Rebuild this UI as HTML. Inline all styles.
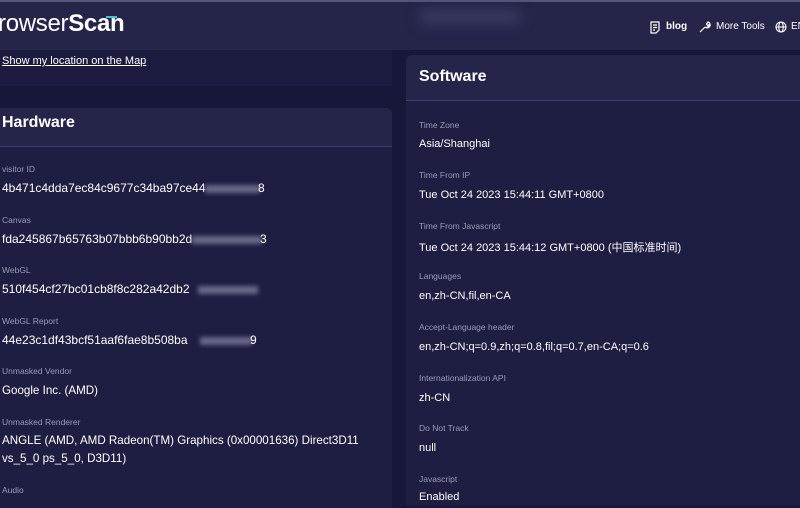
<!DOCTYPE html>
<html><head><meta charset="utf-8"><style>
*{margin:0;padding:0;box-sizing:border-box}
body{width:800px;height:500px;overflow:hidden;background:#17173a;font-family:"Liberation Sans","Noto Sans CJK SC",sans-serif;color:#fff;position:relative}
.hdr{position:absolute;left:0;top:0;width:800px;height:50px;background:#25254a;border-top:2px solid #55557a}
.logo{position:absolute;left:-2px;top:8px;font-size:24px;letter-spacing:-0.3px}
.logo b{font-weight:bold}
.nav{position:absolute;top:19px;font-size:10px}
.band{position:absolute;left:0;top:50px;width:392px;height:36px;background:#1c1c40}
.link{position:absolute;left:2px;top:55px;font-size:11px;text-decoration:underline}
.card{position:absolute;background:#1e1e42}
.ch{position:absolute;background:#25254a;border-bottom:1px solid #3e3e66}
.h{position:absolute;font-size:16px;font-weight:bold}
.l{position:absolute;font-size:8.5px;color:#9a9ab8}
.v{position:absolute;font-size:11px;color:#fff;white-space:nowrap}
.hx{font-size:12px}
.lv{font-size:11.6px}
.blur{position:absolute;height:8px;background:#7a7a9a;filter:blur(2px);opacity:.8}
</style></head><body>
<div class="hdr">
<div class="logo">rowser<b>Scan</b></div>
<div style="position:absolute;left:106px;top:14px;width:11px;height:2px;background:#3ec6d8"></div>
<div style="position:absolute;left:420px;top:8px;width:100px;height:14px;background:#3a3a60;filter:blur(6px)"></div>
<svg style="position:absolute;left:649px;top:19px" width="12" height="13" viewBox="0 0 12 13" fill="none" stroke="#fff" stroke-width="1.2"><path d="M2 1h8v8l-3 3H2z M4 4h4 M4 6.5h4 M4 9h2"/></svg>
<div class="nav" style="left:666px;font-weight:bold">blog</div>
<svg style="position:absolute;left:699px;top:19px" width="12" height="12" viewBox="0 0 12 12" fill="none" stroke="#fff" stroke-width="1.2"><path d="M1 11l5-5 M6 6a3 3 0 1 0 3-5l-1.5 2 1 1.5 2-1A3 3 0 0 1 6 6"/></svg>
<div class="nav" style="left:716px">More Tools</div>
<svg style="position:absolute;left:775px;top:19px" width="12" height="12" viewBox="0 0 12 12" fill="none" stroke="#fff" stroke-width="1.1"><circle cx="6" cy="6" r="5"/><ellipse cx="6" cy="6" rx="2.2" ry="5"/><path d="M1 6h10"/></svg>
<div class="nav" style="left:791px">EN</div>
</div>
<div class="band"></div>
<div class="link">Show my location on the Map</div>

<div class="card" style="left:0;top:108px;width:392px;height:400px;border-radius:0 6px 0 0"></div>
<div class="ch" style="left:0;top:108px;width:392px;height:39px;border-radius:0 6px 0 0"></div>
<div class="h" style="left:2px;top:114px">Hardware</div>
<div class="l" style="left:2px;top:164px">visitor ID</div><div class="v hx" style="left:2px;top:181px">4b471c4dda7ec84c9677c34ba97ce44</div><div class="blur" style="left:205px;top:185px;width:55px"></div><div class="v hx" style="left:258px;top:181px">8</div>
<div class="l" style="left:2px;top:215px">Canvas</div><div class="v hx" style="left:2px;top:232px">fda245867b65763b07bbb6b90bb2d</div><div class="blur" style="left:192px;top:236px;width:70px"></div><div class="v hx" style="left:260px;top:232px">3</div>
<div class="l" style="left:2px;top:265px">WebGL</div><div class="v hx" style="left:2px;top:282px">510f454cf27bc01cb8f8c282a42db2</div><div class="blur" style="left:198px;top:286px;width:60px"></div>
<div class="l" style="left:2px;top:316px">WebGL Report</div><div class="v hx" style="left:2px;top:333px">44e23c1df43bcf51aaf6fae8b508ba</div><div class="blur" style="left:200px;top:337px;width:52px"></div><div class="v hx" style="left:250px;top:333px">9</div>
<div class="l" style="left:2px;top:366px">Unmasked Vendor</div><div class="v lv" style="left:2px;top:384px">Google Inc. (AMD)</div>
<div class="l" style="left:2px;top:417px">Unmasked Renderer</div><div class="v lv" style="left:2px;top:434px">ANGLE (AMD, AMD Radeon(TM) Graphics (0x00001636) Direct3D11</div><div class="v lv" style="left:2px;top:452px">vs_5_0 ps_5_0, D3D11)</div>
<div class="l" style="left:2px;top:485px">Audio</div>

<div class="card" style="left:406px;top:55px;width:394px;height:450px;border-radius:6px 0 0 0"></div>
<div class="ch" style="left:406px;top:55px;width:394px;height:46px;border-radius:6px 0 0 0"></div>
<div class="h" style="left:419px;top:68px">Software</div>
<div class="l" style="left:419px;top:120px">Time Zone</div><div class="v" style="left:419px;top:138px">Asia/Shanghai</div>
<div class="l" style="left:419px;top:170px">Time From IP</div><div class="v" style="left:419px;top:189px">Tue Oct 24 2023 15:44:11 GMT+0800</div>
<div class="l" style="left:419px;top:221px">Time From Javascript</div><div class="v" style="left:419px;top:239px">Tue Oct 24 2023 15:44:12 GMT+0800 (中国标准时间)</div>
<div class="l" style="left:419px;top:271px">Languages</div><div class="v" style="left:419px;top:290px">en,zh-CN,fil,en-CA</div>
<div class="l" style="left:419px;top:322px">Accept-Language header</div><div class="v" style="left:419px;top:341px">en,zh-CN;q=0.9,zh;q=0.8,fil;q=0.7,en-CA;q=0.6</div>
<div class="l" style="left:419px;top:373px">Internationalization API</div><div class="v" style="left:419px;top:392px">zh-CN</div>
<div class="l" style="left:419px;top:423px">Do Not Track</div><div class="v" style="left:419px;top:442px">null</div>
<div class="l" style="left:419px;top:474px">Javascript</div><div class="v" style="left:419px;top:491px">Enabled</div>
</body></html>
